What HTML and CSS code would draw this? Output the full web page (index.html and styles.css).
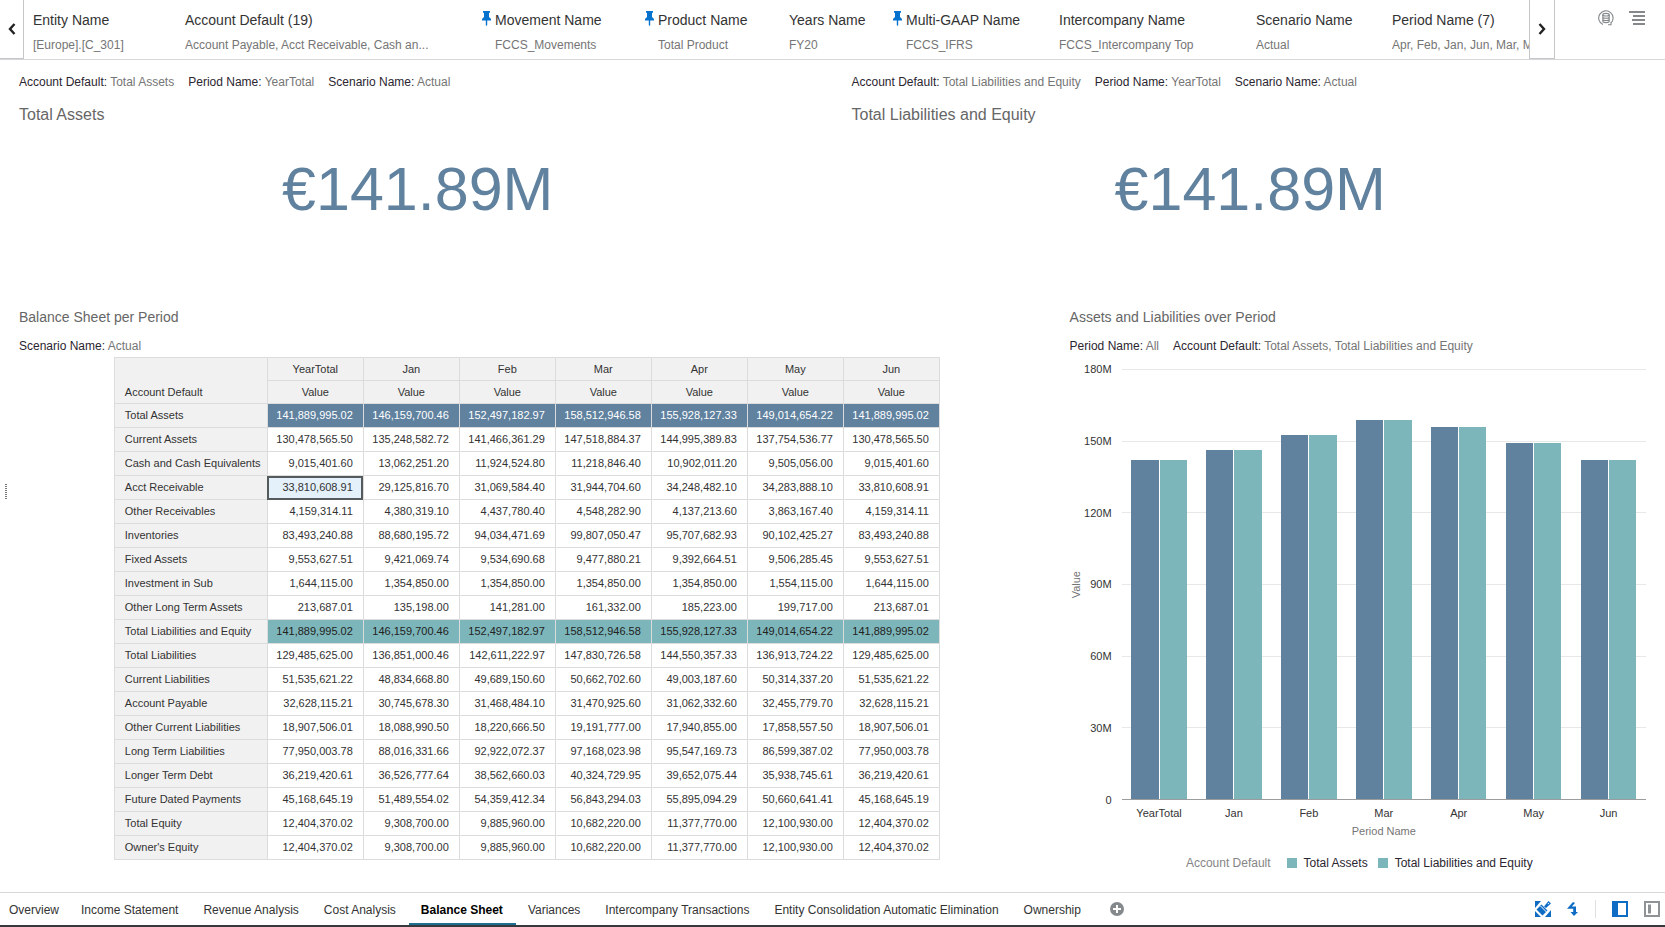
FILE: index.html
```html
<!DOCTYPE html>
<html lang="en">
<head>
    <meta charset="UTF-8">
    <meta name="viewport" content="width=device-width, initial-scale=1.0">
    <title>Balance Sheet</title>
    <link rel="stylesheet" href="styles.css">
</head>
<body>

    <header class="topbar">
        <button class="nav-btn nav-prev" aria-label="Previous">
            <svg width="8" height="12" viewBox="0 0 8 12"><path d="M6.5 1 L2 6 L6.5 11" fill="none" stroke="#222" stroke-width="2.4"/></svg>
        </button>
        <div class="pov">
            <button class="pov-item"><span class="pov-name">Entity Name</span><span class="pov-value">[Europe].[C_301]</span></button>
            <button class="pov-item"><span class="pov-name">Account Default (19)</span><span class="pov-value">Account Payable, Acct Receivable, Cash an...</span></button>
            <button class="pov-item pinned">
                <svg class="pin" width="9" height="15" viewBox="0 0 9 15"><path d="M1 0h7v1.500l-1 .5v4l2 2v1.500H5.200V14L4.500 15 3.800 14V9.500H0V8l2-2V2L1 1.500z" fill="#0572ce"/></svg>
                <span class="pov-name">Movement Name</span><span class="pov-value">FCCS_Movements</span>
            </button>
            <button class="pov-item pinned">
                <svg class="pin" width="9" height="15" viewBox="0 0 9 15"><path d="M1 0h7v1.500l-1 .5v4l2 2v1.500H5.200V14L4.500 15 3.800 14V9.500H0V8l2-2V2L1 1.500z" fill="#0572ce"/></svg>
                <span class="pov-name">Product Name</span><span class="pov-value">Total Product</span>
            </button>
            <button class="pov-item"><span class="pov-name">Years Name</span><span class="pov-value">FY20</span></button>
            <button class="pov-item pinned">
                <svg class="pin" width="9" height="15" viewBox="0 0 9 15"><path d="M1 0h7v1.500l-1 .5v4l2 2v1.500H5.200V14L4.500 15 3.800 14V9.500H0V8l2-2V2L1 1.500z" fill="#0572ce"/></svg>
                <span class="pov-name">Multi-GAAP Name</span><span class="pov-value">FCCS_IFRS</span>
            </button>
            <button class="pov-item"><span class="pov-name">Intercompany Name</span><span class="pov-value">FCCS_Intercompany Top</span></button>
            <button class="pov-item"><span class="pov-name">Scenario Name</span><span class="pov-value">Actual</span></button>
            <button class="pov-item"><span class="pov-name">Period Name (7)</span><span class="pov-value">Apr, Feb, Jan, Jun, Mar, M</span></button>
        </div>
        <button class="nav-btn nav-next" aria-label="Next">
            <svg width="8" height="12" viewBox="0 0 8 12"><path d="M1.500 1 L6 6 L1.500 11" fill="none" stroke="#222" stroke-width="2.4"/></svg>
        </button>
        <div class="tools">
            <button class="icon-btn" aria-label="Data source">
                <svg width="16" height="16" viewBox="0 0 16 16" fill="none" stroke="#85898c" stroke-width="1.1">
                    <path d="M5 14.600A7.200 7.200 0 1 1 12.600 13.500M10 14.800h3v-3"/>
                    <ellipse cx="8" cy="4.700" rx="3.200" ry="1.300"/>
                    <path d="M4.800 4.700v6.600c0 .7 1.400 1.300 3.200 1.300s3.200-.6 3.200-1.300V4.700M4.800 7c0 .7 1.400 1.300 3.200 1.300s3.200-.6 3.200-1.300M4.800 9.200c0 .7 1.400 1.300 3.200 1.300s3.200-.6 3.200-1.300"/>
                </svg>
            </button>
            <button class="icon-btn" aria-label="Menu">
                <svg width="16" height="16" viewBox="0 0 16 16" fill="#85898c"><path d="M0 1h16v2H0zM4 5h12v2H4zM3 9h13v2H3zM4 13h12v2H4z"/></svg>
            </button>
        </div>
    </header>

    <main class="dashboard">
        <button class="splitter" aria-label="Open panel"></button>

        <div class="row row-kpi">
            <section class="tile">
                <p class="filters"><span>Account Default: <i>Total Assets</i></span><span>Period Name: <i>YearTotal</i></span><span>Scenario Name: <i>Actual</i></span></p>
                <h2 class="kpi-title">Total Assets</h2>
                <div class="kpi">€141.89M</div>
            </section>
            <section class="tile">
                <p class="filters"><span>Account Default: <i>Total Liabilities and Equity</i></span><span>Period Name: <i>YearTotal</i></span><span>Scenario Name: <i>Actual</i></span></p>
                <h2 class="kpi-title">Total Liabilities and Equity</h2>
                <div class="kpi">€141.89M</div>
            </section>
        </div>

        <div class="row row-detail">
            <section class="tile">
                <h2 class="tile-title">Balance Sheet per Period</h2>
                <p class="filters"><span>Scenario Name: <i>Actual</i></span></p>
                <table class="grid">
                    <thead>
                        <tr><th class="corner" rowspan="2">Account Default</th><th>YearTotal</th><th>Jan</th><th>Feb</th><th>Mar</th><th>Apr</th><th>May</th><th>Jun</th></tr>
                        <tr><th>Value</th><th>Value</th><th>Value</th><th>Value</th><th>Value</th><th>Value</th><th>Value</th></tr>
                    </thead>
                    <tbody>
                        <tr class="assets"><th>Total Assets</th><td>141,889,995.02</td><td>146,159,700.46</td><td>152,497,182.97</td><td>158,512,946.58</td><td>155,928,127.33</td><td>149,014,654.22</td><td>141,889,995.02</td></tr>
                        <tr><th>Current Assets</th><td>130,478,565.50</td><td>135,248,582.72</td><td>141,466,361.29</td><td>147,518,884.37</td><td>144,995,389.83</td><td>137,754,536.77</td><td>130,478,565.50</td></tr>
                        <tr><th>Cash and Cash Equivalents</th><td>9,015,401.60</td><td>13,062,251.20</td><td>11,924,524.80</td><td>11,218,846.40</td><td>10,902,011.20</td><td>9,505,056.00</td><td>9,015,401.60</td></tr>
                        <tr><th>Acct Receivable</th><td class="selected">33,810,608.91</td><td>29,125,816.70</td><td>31,069,584.40</td><td>31,944,704.60</td><td>34,248,482.10</td><td>34,283,888.10</td><td>33,810,608.91</td></tr>
                        <tr><th>Other Receivables</th><td>4,159,314.11</td><td>4,380,319.10</td><td>4,437,780.40</td><td>4,548,282.90</td><td>4,137,213.60</td><td>3,863,167.40</td><td>4,159,314.11</td></tr>
                        <tr><th>Inventories</th><td>83,493,240.88</td><td>88,680,195.72</td><td>94,034,471.69</td><td>99,807,050.47</td><td>95,707,682.93</td><td>90,102,425.27</td><td>83,493,240.88</td></tr>
                        <tr><th>Fixed Assets</th><td>9,553,627.51</td><td>9,421,069.74</td><td>9,534,690.68</td><td>9,477,880.21</td><td>9,392,664.51</td><td>9,506,285.45</td><td>9,553,627.51</td></tr>
                        <tr><th>Investment in Sub</th><td>1,644,115.00</td><td>1,354,850.00</td><td>1,354,850.00</td><td>1,354,850.00</td><td>1,354,850.00</td><td>1,554,115.00</td><td>1,644,115.00</td></tr>
                        <tr><th>Other Long Term Assets</th><td>213,687.01</td><td>135,198.00</td><td>141,281.00</td><td>161,332.00</td><td>185,223.00</td><td>199,717.00</td><td>213,687.01</td></tr>
                        <tr class="liabilities"><th>Total Liabilities and Equity</th><td>141,889,995.02</td><td>146,159,700.46</td><td>152,497,182.97</td><td>158,512,946.58</td><td>155,928,127.33</td><td>149,014,654.22</td><td>141,889,995.02</td></tr>
                        <tr><th>Total Liabilities</th><td>129,485,625.00</td><td>136,851,000.46</td><td>142,611,222.97</td><td>147,830,726.58</td><td>144,550,357.33</td><td>136,913,724.22</td><td>129,485,625.00</td></tr>
                        <tr><th>Current Liabilities</th><td>51,535,621.22</td><td>48,834,668.80</td><td>49,689,150.60</td><td>50,662,702.60</td><td>49,003,187.60</td><td>50,314,337.20</td><td>51,535,621.22</td></tr>
                        <tr><th>Account Payable</th><td>32,628,115.21</td><td>30,745,678.30</td><td>31,468,484.10</td><td>31,470,925.60</td><td>31,062,332.60</td><td>32,455,779.70</td><td>32,628,115.21</td></tr>
                        <tr><th>Other Current Liabilities</th><td>18,907,506.01</td><td>18,088,990.50</td><td>18,220,666.50</td><td>19,191,777.00</td><td>17,940,855.00</td><td>17,858,557.50</td><td>18,907,506.01</td></tr>
                        <tr><th>Long Term Liabilities</th><td>77,950,003.78</td><td>88,016,331.66</td><td>92,922,072.37</td><td>97,168,023.98</td><td>95,547,169.73</td><td>86,599,387.02</td><td>77,950,003.78</td></tr>
                        <tr><th>Longer Term Debt</th><td>36,219,420.61</td><td>36,526,777.64</td><td>38,562,660.03</td><td>40,324,729.95</td><td>39,652,075.44</td><td>35,938,745.61</td><td>36,219,420.61</td></tr>
                        <tr><th>Future Dated Payments</th><td>45,168,645.19</td><td>51,489,554.02</td><td>54,359,412.34</td><td>56,843,294.03</td><td>55,895,094.29</td><td>50,660,641.41</td><td>45,168,645.19</td></tr>
                        <tr><th>Total Equity</th><td>12,404,370.02</td><td>9,308,700.00</td><td>9,885,960.00</td><td>10,682,220.00</td><td>11,377,770.00</td><td>12,100,930.00</td><td>12,404,370.02</td></tr>
                        <tr><th>Owner's Equity</th><td>12,404,370.02</td><td>9,308,700.00</td><td>9,885,960.00</td><td>10,682,220.00</td><td>11,377,770.00</td><td>12,100,930.00</td><td>12,404,370.02</td></tr>
                    </tbody>
                </table>
            </section>

            <section class="tile chart-tile">
                <h2 class="tile-title">Assets and Liabilities over Period</h2>
                <p class="filters"><span>Period Name: <i>All</i></span><span>Account Default: <i>Total Assets, Total Liabilities and Equity</i></span></p>
                <div class="chart">
                    <div class="y-title">Value</div>
                    <div class="y-axis"><span>180M</span><span>150M</span><span>120M</span><span>90M</span><span>60M</span><span>30M</span><span>0</span></div>
                    <div class="plot">
                        <div class="lines"><div></div><div></div><div></div><div></div><div></div><div></div></div>
                        <div class="bars">
                            <!-- heights are a share of 180M -->
                            <div class="pair" style="height: 78.83%"><div class="bar-a"></div><div class="bar-b"></div></div>
                            <div class="pair" style="height: 81.2%"><div class="bar-a"></div><div class="bar-b"></div></div>
                            <div class="pair" style="height: 84.72%"><div class="bar-a"></div><div class="bar-b"></div></div>
                            <div class="pair" style="height: 88.06%"><div class="bar-a"></div><div class="bar-b"></div></div>
                            <div class="pair" style="height: 86.63%"><div class="bar-a"></div><div class="bar-b"></div></div>
                            <div class="pair" style="height: 82.79%"><div class="bar-a"></div><div class="bar-b"></div></div>
                            <div class="pair" style="height: 78.83%"><div class="bar-a"></div><div class="bar-b"></div></div>
                        </div>
                    </div>
                    <div class="x-axis"><span>YearTotal</span><span>Jan</span><span>Feb</span><span>Mar</span><span>Apr</span><span>May</span><span>Jun</span></div>
                    <div class="x-title">Period Name</div>
                </div>
                <div class="legend">
                    <span class="legend-title">Account Default</span>
                    <span class="legend-item">Total Assets</span>
                    <span class="legend-item">Total Liabilities and Equity</span>
                </div>
            </section>
        </div>
    </main>

    <footer class="bottombar">
        <nav class="tabs">
            <a href="#">Overview</a>
            <a href="#">Income Statement</a>
            <a href="#">Revenue Analysis</a>
            <a href="#">Cost Analysis</a>
            <a href="#" class="active">Balance Sheet</a>
            <a href="#">Variances</a>
            <a href="#">Intercompany Transactions</a>
            <a href="#">Entity Consolidation Automatic Elimination</a>
            <a href="#">Ownership</a>
        </nav>
        <button class="icon-btn add-tab" aria-label="Add tab">
            <svg width="14" height="14" viewBox="0 0 14 14"><circle cx="7" cy="7" r="7" fill="#85898c"/><path d="M7 3v8M3 7h8" stroke="#fff" stroke-width="2"/></svg>
        </button>
        <div class="view-tools">
            <button class="icon-btn" aria-label="Format">
                <svg width="16" height="16" viewBox="0 0 16 16">
                    <path d="M0 0h6L0 7zM0 16v-6l6 6zM10 16l6-7v7z" fill="#0f6cc4"/>
                    <path d="M1.500 8.500L7.500 14.500 12.500 9.500 6.500 3.500zM9 5.500L13.500 0 16 2.500 11 7z" fill="#0f6cc4"/>
                    <path d="M5.500 5l6 6" stroke="#fff" stroke-width="1"/>
                    <circle cx="13.500" cy="2.600" r=".7" fill="#fff"/>
                </svg>
            </button>
            <button class="icon-btn bolt" aria-label="Actions">
                <svg width="12" height="14" viewBox="0 0 12 14"><path d="M6 0L0 6.800h6.200v3.200H3.500L7 14l4-4H9V4.600H4.800L8 1z" fill="#0f6cc4"/></svg>
            </button>
            <span class="divider"></span>
            <button class="icon-btn" aria-label="Side panel">
                <svg width="16" height="16" viewBox="0 0 16 16"><path d="M0 0h16v16H0zM6 2v12h8V2z" fill="#0f6cc4" fill-rule="evenodd"/></svg>
            </button>
            <button class="icon-btn" aria-label="Full view">
                <svg width="16" height="16" viewBox="0 0 16 16"><path d="M1 1h14v14H1z" fill="none" stroke="#909395" stroke-width="2"/><path d="M4 3.500h3v9H4z" fill="#909395"/></svg>
            </button>
        </div>
    </footer>

</body>
</html>
```

FILE: styles.css
```css
* {
    box-sizing: border-box;
}
body {
    margin: 0;
    min-height: 100vh;
    display: flex;
    flex-direction: column;
    font-family: "Liberation Sans", Arial, sans-serif;
    font-size: 12px;
    line-height: 16px;
    color: #333;
    background-color: #fff;
}
button {
    font: inherit;
    color: inherit;
    background: none;
    border: none;
    padding: 0;
    cursor: pointer;
}
h2, p {
    margin: 0;
    font-weight: normal;
}
svg {
    display: block;
}

/* Top bar */
.topbar {
    display: flex;
    align-items: flex-start;
    height: 60px;
    border-bottom: 1px solid #d6d7d8;
}
.nav-btn {
    display: flex;
    align-items: center;
    justify-content: center;
    flex: none;
    height: 59px;
    border-bottom: 1px solid #c4c6c8;
}
.nav-prev {
    width: 24px;
    border-right: 1px solid #c4c6c8;
}
.nav-next {
    width: 26px;
    border-left: 1px solid #c4c6c8;
    border-right: 1px solid #c4c6c8;
}
.pov {
    flex: 1;
    min-width: 0;
    display: grid;
    grid-template-columns: 152px 297px 163px 144px 104px 166px 197px 136px 1fr;
    padding: 11px 0 0 9px;
    overflow: hidden;
}
.pov-item {
    min-width: 0;
    display: grid;
    align-content: start;
    row-gap: 8px;
    text-align: left;
    white-space: nowrap;
}
.pinned {
    grid-template-columns: 13px 1fr;
}
.pinned .pov-value {
    grid-column: 2;
}
.pov-name {
    font-size: 14px;
    line-height: 18px;
}
.pov-value {
    color: #757575;
}
.tools {
    display: flex;
    flex: none;
    gap: 15px;
    padding: 10px 20px 0 43px;
}

/* Dashboard */
.dashboard {
    position: relative;
    flex: 1;
    display: flex;
    flex-direction: column;
}
.splitter {
    position: absolute;
    left: 5px;
    top: 424px;
    width: 2px;
    height: 16px;
    background: repeating-linear-gradient(#777 0 1px, #fff 1px 2px);
}
.row {
    display: grid;
}
.row-kpi {
    grid-template-columns: 1fr 1fr;
    height: 235px;
}
.row-detail {
    flex: 1;
    grid-template-columns: 63.1% 1fr;
}
.tile {
    min-width: 0;
    padding: 14px 16px 21px 19px;
}
.filters {
    display: flex;
    gap: 14px;
    color: #2b2530;
    white-space: nowrap;
}
.filters i {
    font-style: normal;
    color: #757575;
}
.kpi-title {
    margin-top: 15px;
    font-size: 16px;
    line-height: 20px;
    color: #666;
}
.kpi {
    margin-top: 28px;
    font-size: 61px;
    line-height: 72px;
    text-align: center;
    color: #60829f;
}
.tile-title {
    margin-bottom: 13px;
    font-size: 14px;
    line-height: 16px;
    color: #666;
}

/* Table */
.grid {
    width: 826px;
    margin: 3px auto 0;
    table-layout: fixed;
    border-collapse: collapse;
    font-size: 11px;
    line-height: 23px;
}
.grid th,
.grid td {
    padding: 0 10px;
    border: 1px solid #dcdcdc;
    font-weight: normal;
    white-space: nowrap;
}
.grid th {
    background-color: #f1f1f1;
}
.grid thead {
    line-height: 22px;
}
.grid td {
    padding-left: 4px;
    text-align: right;
}
.grid tbody th,
.grid .corner {
    width: 153px;
    text-align: left;
    vertical-align: bottom;
}
.grid .assets td {
    background-color: #60829f;
    color: #fff;
}
.grid .liabilities td {
    background-color: #7db6ba;
    color: #222;
}
.grid .selected {
    background-color: #e4f1fb;
    outline: 2px solid #555a5d;
    outline-offset: -2px;
}

/* Chart */
.chart-tile {
    display: flex;
    flex-direction: column;
}
.chart {
    flex: 1;
    display: grid;
    grid-template-columns: 12px 30px 1fr;
    grid-template-rows: 1fr 19px 16px;
    row-gap: 2px;
    margin: 15px 3px 0 0;
    font-size: 11px;
}
.y-title {
    align-self: center;
    writing-mode: vertical-rl;
    transform: rotate(180deg);
    line-height: 12px;
    text-align: center;
    color: #757575;
}
.y-axis {
    display: flex;
    flex-direction: column;
    justify-content: space-between;
    margin: -8px 0;
    text-align: right;
}
.plot,
.x-axis,
.x-title {
    margin-left: 10px;
}
.plot {
    display: grid;
    border-bottom: 1px solid #9a9c9e;
}
.lines,
.bars {
    grid-area: 1 / 1;
    display: grid;
}
.lines div {
    border-top: 1px solid #e6e8ea;
}
.bars {
    grid-template-columns: repeat(7, 1fr);
    align-items: end;
    justify-items: center;
}
.pair {
    width: 74%;
    display: flex;
    gap: 1px;
    background-color: #fff;
}
.bar-a,
.bar-b {
    flex: 1;
    background-color: #60829f;
}
.bar-b {
    background-color: #7db6ba;
}
.x-axis {
    grid-column: 3;
    display: grid;
    grid-template-columns: repeat(7, 1fr);
    padding-top: 3px;
    line-height: 16px;
    text-align: center;
}
.x-title {
    grid-column: 3;
    text-align: center;
    color: #757575;
}
.legend {
    display: flex;
    justify-content: center;
    gap: 10px;
    margin-top: 16px;
    color: #2b2530;
}
.legend-title {
    margin-right: 6px;
    color: #858585;
}
.legend-item {
    display: flex;
    align-items: center;
    gap: 7px;
}
.legend-item::before {
    content: "";
    width: 10px;
    height: 10px;
    background-color: #7db6ba;
}

/* Bottom bar */
.bottombar {
    display: flex;
    align-items: center;
    height: 35px;
    border-top: 1px solid #d6d7d8;
    border-bottom: 2px solid #35393d;
}
.tabs {
    display: flex;
    align-self: stretch;
    white-space: nowrap;
}
.tabs a {
    padding: 9px 13px 0 12px;
    color: #333;
    text-decoration: none;
}
.tabs a:first-child {
    padding: 9px 10px 0 9px;
}
.tabs .active {
    font-weight: bold;
    color: #000;
    border-bottom: 2px solid #1f6d8f;
}
.add-tab {
    margin-left: 16px;
}
.view-tools {
    display: flex;
    align-items: center;
    gap: 16px;
    margin-left: auto;
    padding-right: 5px;
}
.divider {
    width: 1px;
    height: 18px;
    background-color: #e0e0e0;
}
```
